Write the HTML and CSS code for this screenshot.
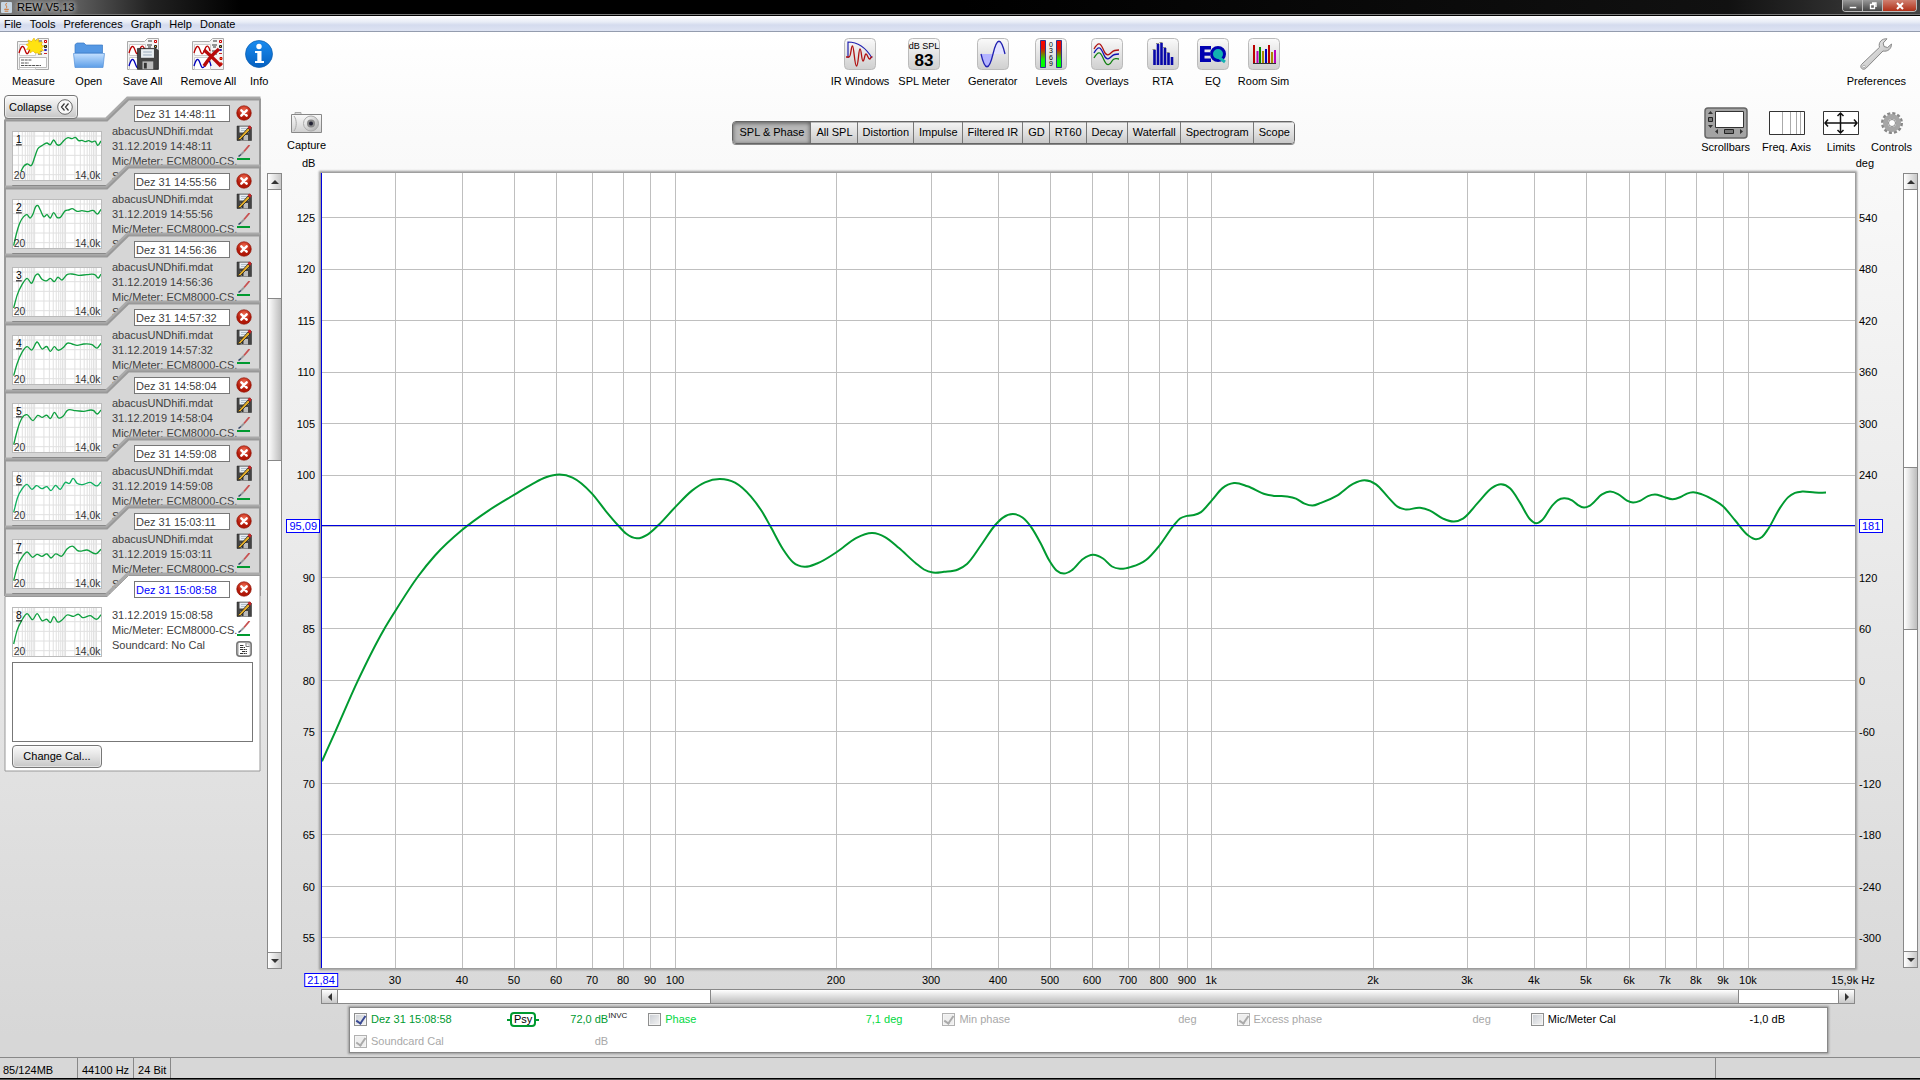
FILE: index.html
```html
<!DOCTYPE html>
<html lang="en">
<head>
	<meta charset="utf-8">
	<title>REW V5,13</title>
	<link rel="stylesheet" href="styles.css">
</head>
<body>
<svg class="defs" aria-hidden="true">
	<defs>
		<linearGradient id="g-btn" x2="0" y2="1"><stop offset="0" stop-color="#fafafa"/><stop offset="1" stop-color="#cfcfcf"/></linearGradient>
		<linearGradient id="g-folder" x2="0" y2="1"><stop offset="0" stop-color="#c4e0ff"/><stop offset="1" stop-color="#5c9ee8"/></linearGradient>
		<linearGradient id="g-info" x2="0" y2="1"><stop offset="0" stop-color="#1a8cf0"/><stop offset="1" stop-color="#0560c0"/></linearGradient>
		<linearGradient id="g-level" x2="0" y2="1"><stop offset="0" stop-color="#f00"/><stop offset=".3" stop-color="#e01000"/><stop offset=".75" stop-color="#0f0"/><stop offset="1" stop-color="#0f0"/></linearGradient>
		<radialGradient id="g-close" cy=".3"><stop offset="0" stop-color="#f06a50"/><stop offset="1" stop-color="#b01808"/></radialGradient>
		<linearGradient id="g-metal" x2="1" y2="1"><stop offset="0" stop-color="#fff"/><stop offset="1" stop-color="#a8a8a8"/></linearGradient>
	</defs>
	<symbol id="i-doc" viewBox="0 0 32 32">
		<path d="M.5 3.500h17l3-3h11v31H.5z" fill="#f4f4f4" stroke="#aaa"/>
		<path d="M2.500 6.500h16v11h-16zM2.500 19.500h16v12h-16z" fill="#fff" stroke="#ccc"/>
		<path d="M21 3h4M20 7h5M21 9h3M20 13h5M21 16h4" stroke="#333"/>
		<path d="M27.500 2.500h2v2h-2z" fill="#fff" stroke="#c00"/>
		<path d="M27.500 7.500h2v2h-2z" fill="#e7b62c" stroke="#222"/>
		<path d="M27.500 11.500h2v1h-2z" fill="#fff" stroke="#22b"/>
		<path d="M27 15.500h3" stroke="#c22"/>
	</symbol>
	<symbol id="i-red" viewBox="0 0 32 32"><path d="M2 15c2-7 4-9 6-3s3 4 5-1 4-3 5 2" fill="none" stroke="#b00" stroke-width="1.300"/></symbol>
	<symbol id="i-blue" viewBox="0 0 32 32"><path d="M2 28c2-7 4-9 6-3s3 6 6 1 4-3 5 2" fill="none" stroke="#00b" stroke-width="1.300"/></symbol>
	<symbol id="i-floppy" viewBox="0 0 16 16">
		<path d="M1 1h13l1.500 1.500v13H1z" fill="#444" stroke="#222" stroke-width=".5"/>
		<path d="M3.500 1.500h9v6h-9z" fill="#e9eef2"/><path d="M5 3.500h6M5 5.500h6" stroke="#9ab" stroke-width=".7"/>
		<path d="M4.500 10h7.500v5.500H4.500z" fill="#bbb"/><path d="M5.500 11h2v4h-2z" fill="#333"/>
	</symbol>
	<symbol id="i-close" viewBox="0 0 16 16">
		<circle cx="8" cy="8" r="7.300" fill="url(#g-close)" stroke="#8c1005" stroke-width=".6"/>
		<path d="M5.300 5.300l5.400 5.400M10.700 5.300l-5.400 5.400" stroke="#fff" stroke-width="2.400" stroke-linecap="round"/>
	</symbol>
	<symbol id="i-edit" viewBox="0 0 16 16">
		<use href="#i-floppy"/><path d="M2.500 13.500L12 3l2 2-9.500 9.500-3 .5z" fill="#e2ac28" stroke="#222" stroke-width=".8"/><path d="M11.500 2l2.500-1.500 1.500 2L14 5z" fill="#c22"/>
	</symbol>
	<symbol id="i-pen" viewBox="0 0 16 16">
		<path d="M13.500 0L8 6.500" stroke="#c75050" stroke-width="1.800"/><path d="M8 6.500L5 9.500" stroke="#999" stroke-width="1.800"/><path d="M5 9.500L2.500 11.500" stroke="#346" stroke-width="1.600"/>
		<path d="M1 14h13" stroke="currentColor" stroke-width="2"/>
	</symbol>
	<symbol id="i-note" viewBox="0 0 16 16">
		<rect x=".8" y=".8" width="14.400" height="14.400" rx="3" fill="#ccc" stroke="#777" stroke-width="1.500"/>
		<path d="M3 2h7l3.500 3.500V14H3z" fill="#fff"/><path d="M10 2v3.500h3.500" fill="none" stroke="#777"/>
		<path d="M4 4.500h4M4 6.500h5M4 8.500h7M6 10.500h5M4 12.500h7" stroke="#333" stroke-dasharray="3 .6 2 .6"/>
	</symbol>
</svg>

<header class="titlebar">
	<svg class="app-icon" viewBox="0 0 12 12"><rect width="12" height="12" rx="1" fill="#c8d6e2"/><path d="M6.500 1C3 4 8 4 5.500 7M3.500 8h5M4 10h4" stroke="#d06a20" fill="none"/></svg>
	<span class="app-title">REW V5,13</span>
	<div class="win-buttons">
		<button type="button" aria-label="Minimize"><svg viewBox="0 0 10 8"><path d="M1.500 4.500h7v2h-7z" fill="#fff" stroke="#555" stroke-width=".5"/></svg></button>
		<button type="button" aria-label="Restore"><svg viewBox="0 0 10 8"><path d="M4 1h4v4M2.500 2.500h4v4h-4z" fill="none" stroke="#fff" stroke-width="1.300"/></svg></button>
		<button type="button" class="win-close" aria-label="Close"><svg viewBox="0 0 10 8"><path d="M2 1l6 6M8 1L2 7" stroke="#fff" stroke-width="2"/></svg></button>
	</div>
</header>

<nav class="menubar">
	<a href="#">File</a>
	<a href="#">Tools</a>
	<a href="#">Preferences</a>
	<a href="#">Graph</a>
	<a href="#">Help</a>
	<a href="#">Donate</a>
</nav>

<main class="main">
	<div class="toolbar">
		<div class="tools">
			<button type="button" class="tool">
				<svg viewBox="0 0 32 32"><use href="#i-doc"/><use href="#i-red"/><path d="M2.500 19.500h27v10h-27z" fill="#fff" stroke="#bbb"/><path d="M4 22h11M4 25h8M4 27.500h20" stroke="#555" stroke-dasharray="3 .7"/><path d="M17 0l1.500 3 3-2 .3 3.500 3.500-.5-1 3.200 2.700.8-2.500 2 2 2.500-3.500.5.500 3.500-3-1.500L18 15l-2-2-3 2 0-3.500-3.500 0 2-2.800L9 6.500l3-1-1-3.500 3.500 1.500z" fill="#ffe311" stroke="#e8b400" stroke-width=".6"/></svg>
				Measure
			</button>
			<button type="button" class="tool">
				<svg viewBox="0 0 32 32"><path d="M2 15V6.500L4 5h7l2 2h16.500v8z" fill="#5598e4" stroke="#3a78c4" stroke-width=".7"/><path d="M.5 15.500h31L30 29.500H2z" fill="url(#g-folder)" stroke="#5590d8" stroke-width=".7"/></svg>
				Open
			</button>
			<button type="button" class="tool">
				<svg viewBox="0 0 32 32"><use href="#i-doc"/><use href="#i-red"/><use href="#i-blue"/><use href="#i-floppy" x="9" y="9" width="23" height="23"/></svg>
				Save All
			</button>
			<div class="tools-pair">
				<button type="button" class="tool">
					<svg viewBox="0 0 32 32"><use href="#i-doc"/><use href="#i-red"/><use href="#i-blue"/><path d="M28 19.500h2v2h-2zM28 25h2v2h-2z" fill="#e7b62c" stroke="#c00"/><path d="M12 12c5 4 10 9 17 16M27 11c-6 5-10 9-15 17" stroke="#b80a0a" stroke-width="3.500" fill="none"/></svg>
					Remove All
				</button>
				<button type="button" class="tool">
					<svg viewBox="0 0 28 32"><circle cx="14" cy="16" r="13.500" fill="url(#g-info)" stroke="#0a5cae" stroke-width=".7"/><circle cx="14" cy="8.500" r="2.700" fill="#fff"/><path d="M10 13h6.500v10H19v2h-9v-2h2.300v-8H10z" fill="#fff"/></svg>
					Info
				</button>
			</div>
		</div>
		<div class="tools">
			<div class="tools-pair">
				<button type="button" class="tool">
					<svg viewBox="0 0 32 32"><rect x=".5" y=".5" width="31" height="31" rx="4" class="plate"/><path d="M4 20V4c10 0 18 6 24 16" fill="none" stroke="#2222b0" stroke-width="1.200"/><path d="M2 19h3c2 0 2-11 3.500-11s2 20 4 20 2-17 3.500-17 1.500 12 3 12 1.500-7 3-7 2 5 3.500 5 1-3 3-2" fill="none" stroke="#b01010" stroke-width="1.300"/></svg>
					IR Windows
				</button>
				<button type="button" class="tool">
					<svg viewBox="0 0 32 32"><rect x=".5" y=".5" width="31" height="31" rx="4" class="plate"/><text x="16" y="11" class="plate-small">dB SPL</text><text x="16" y="28" class="plate-big">83</text></svg>
					SPL Meter
				</button>
			</div>
			<button type="button" class="tool">
				<svg viewBox="0 0 32 32"><rect x=".5" y=".5" width="31" height="31" rx="4" class="plate"/><path d="M4 16C8 33 12 33 16 16z" fill="#b4b4ff"/><path d="M16 16h12C24-1 20-1 16 16z" fill="#e4e4ff"/><path d="M4 16C8 33 12 33 16 16S24-1 28 16" fill="none" stroke="#2020b0" stroke-width="1.300"/></svg>
				Generator
			</button>
			<button type="button" class="tool">
				<svg viewBox="0 0 32 32"><rect x=".5" y=".5" width="31" height="31" rx="4" class="plate"/><path d="M5.500 2.500h5v27h-5zM21.500 2.500h5v27h-5z" fill="url(#g-level)" stroke="#338"/><g class="plate-digits"><text x="16" y="9">0</text><text x="16" y="15">3</text><text x="16" y="22">6</text><text x="16" y="28">9</text></g></svg>
				Levels
			</button>
			<button type="button" class="tool">
				<svg viewBox="0 0 32 32"><rect x=".5" y=".5" width="31" height="31" rx="4" class="plate"/><g fill="none" stroke-width="1.300"><path d="M3 11c5-9 7-5 10 2s6 3 8 1 4-2 7-2" stroke="#b01010"/><path d="M3 15c5-9 7-5 10 2s6 3 8 1 4-2 7-2" stroke="#1010b0"/><path d="M3 20c5-9 7-5 10 2s6 5 8 1 4-2 7-2" stroke="#108010"/></g></svg>
				Overlays
			</button>
			<button type="button" class="tool">
				<svg viewBox="0 0 32 32"><rect x=".5" y=".5" width="31" height="31" rx="4" class="plate"/><path d="M7.500 27V12M11 27V6M14.500 27V5M18 27V10M21.500 27V15M25 27V19" stroke="#0808a8" stroke-width="2.600"/><path d="M5.500 11.500h3M9 5.500h3M12.500 4.500h3M16 9.500h3M19.500 14.500h3" stroke="#888"/></svg>
				RTA
			</button>
			<div class="tools-pair">
				<button type="button" class="tool">
					<svg viewBox="0 0 32 32"><rect x=".5" y=".5" width="31" height="31" rx="4" class="plate"/><path d="M3 8h11v3.500H7.500v2.800H13v3.400H7.500v2.800H14V24H3z" fill="#0000b0"/><circle cx="21" cy="16" r="6.500" fill="#12b0b0" stroke="#0000b0" stroke-width="3"/><path d="M20 18l8 6" stroke="#12b0b0" stroke-width="3"/></svg>
					EQ
				</button>
				<button type="button" class="tool">
					<svg viewBox="0 0 32 32"><rect x=".5" y=".5" width="31" height="31" rx="4" class="plate"/><g stroke-width="2"><path d="M6 25V7" stroke="#b00"/><path d="M9.500 25V13" stroke="#b0b"/><path d="M12 25V9" stroke="#080"/><path d="M15 25V13" stroke="#a80"/><path d="M18 25V11" stroke="#00b"/><path d="M21 25V7" stroke="#b00"/><path d="M24 25V14" stroke="#a80"/><path d="M27 25V12" stroke="#b0b"/></g><path d="M5 25.500h23" stroke="#333"/></svg>
					Room Sim
				</button>
			</div>
		</div>
		<div class="tools">
			<button type="button" class="tool">
				<svg viewBox="0 0 32 32"><path d="M27 .8c-5-.5-9 3.500-7.500 8.500L1.500 26.500c-2.200 3 1.300 6.300 4.200 4L23 13c4.500 1 8.500-2 8.500-7l-4 3.500-3.500-1-.8-3.500z" fill="url(#g-metal)" stroke="#888"/><circle cx="4" cy="28.500" r="1.300" fill="#fff" stroke="#888" stroke-width=".6"/></svg>
				Preferences
			</button>
		</div>
	</div>

	<div class="workspace">
		<aside class="sidebar">
			<div class="measurements">
				<button type="button" class="btn btn-collapse">Collapse
					<svg viewBox="0 0 16 16"><circle cx="8" cy="8" r="7.300" fill="#f8f8f8" stroke="#666"/><path d="M7.500 4.500L4.500 8l3 3.500M11.500 4.500L8.500 8l3 3.500" fill="none" stroke="#333" stroke-width="1.200"/></svg>
				</button>
				<ul class="cards" id="cards"></ul>
			</div>
			<div class="vscroll">
				<button type="button" aria-label="Scroll up"><i class="arrow up"></i></button>
				<div class="track"><span class="thumb" style="top:14.2%;height:21.4%"></span></div>
				<button type="button" aria-label="Scroll down"><i class="arrow down"></i></button>
			</div>
		</aside>

		<section class="graph">
			<div class="graph-bar">
				<button type="button" class="tool tool-capture">
					<svg viewBox="0 0 32 22"><path d="M4 2.500V.5h6v2" fill="#ddd" stroke="#aaa"/><path d="M.5 2.500h30v18H.5z" fill="url(#g-btn)" stroke="#888"/><path d="M3 4c3 4 3 11 0 15" fill="none" stroke="#aaa"/><circle cx="20" cy="11.500" r="7.500" fill="url(#g-metal)" stroke="#aaa"/><circle cx="20" cy="11.500" r="4" fill="#888"/><circle cx="20" cy="11.500" r="2" fill="#223"/></svg>
					Capture
				</button>
				<div class="tabs">
					<button type="button" class="tab active">SPL &amp; Phase</button>
					<button type="button" class="tab">All SPL</button>
					<button type="button" class="tab">Distortion</button>
					<button type="button" class="tab">Impulse</button>
					<button type="button" class="tab">Filtered IR</button>
					<button type="button" class="tab">GD</button>
					<button type="button" class="tab">RT60</button>
					<button type="button" class="tab">Decay</button>
					<button type="button" class="tab">Waterfall</button>
					<button type="button" class="tab">Spectrogram</button>
					<button type="button" class="tab">Scope</button>
				</div>
				<div class="view-tools">
					<button type="button" class="tool">
						<svg viewBox="0 0 44 32"><rect x="1" y="1" width="42" height="30" rx="3" fill="#a4a4a4" stroke="#666" stroke-width="1.500"/><path d="M11.500 4.500h28v16h-28z" fill="#fff" stroke="#333"/><path d="M4 7h5L6.500 4zM4 18h5l-2.500 3zM14 22v5l-3-2.500zM36 22v5l3-2.500z" fill="#333"/><path d="M4.500 10.500h4v4h-4zM20.500 22.500h9v4h-9z" fill="#777" stroke="#222"/></svg>
						Scrollbars
					</button>
					<button type="button" class="tool">
						<svg viewBox="0 0 36 32"><path d="M.5 4.500h35v23H.5z" fill="#fff" stroke="#333"/><path d="M13.500 5v22M21.500 5v22M27.500 5v22M31.500 5v22" stroke="#aaa"/></svg>
						Freq. Axis
					</button>
					<button type="button" class="tool">
						<svg viewBox="0 0 36 32"><path d="M.5 4.500h35v23H.5z" fill="#fff" stroke="#333"/><path d="M2 16h32M17.500 6v20M5 12.500L2 16l3 3.500M31 12.500l3 3.500-3 3.500M14.500 9l3-3 3 3M14.500 23l3 3 3-3" fill="none" stroke="#111" stroke-width="1.500"/></svg>
						Limits
					</button>
					<button type="button" class="tool">
						<svg viewBox="0 0 24 32"><circle cx="12" cy="16" r="9.500" fill="none" stroke="#888" stroke-width="3" stroke-dasharray="3 1.974"/><circle cx="12" cy="16" r="6.500" fill="#fff" stroke="#a6a6a6" stroke-width="5"/><circle cx="12" cy="16" r="3.500" fill="#fff" stroke="#888"/></svg>
						Controls
					</button>
				</div>
			</div>

			<div class="units"><span>dB</span><span>deg</span></div>

			<div class="plot-row">
				<div class="axis axis-db" id="axis-db"></div>
				<div class="plot">
					<svg id="plot" viewBox="0 0 1534 796" preserveAspectRatio="none">
						<g id="grid" class="grid"></g>
						<path class="curve" id="curve"/>
						<path class="cursor" d="M.5 0V796M0 352.500H1534"/>
					</svg>
				</div>
				<div class="axis axis-deg" id="axis-deg"></div>
				<div class="vscroll">
					<button type="button" aria-label="Scroll up"><i class="arrow up"></i></button>
					<div class="track"><span class="thumb" style="top:36.4%;height:21.4%"></span></div>
					<button type="button" aria-label="Scroll down"><i class="arrow down"></i></button>
				</div>
			</div>

			<div class="axis axis-freq" id="axis-freq"></div>

			<div class="hscroll">
				<button type="button" aria-label="Scroll left"><i class="arrow left"></i></button>
				<div class="track"><span class="thumb" style="left:24.8%;width:68.6%"></span></div>
				<button type="button" aria-label="Scroll right"><i class="arrow right"></i></button>
			</div>

			<div class="legend">
				<div class="trace trace-spl">
					<input type="checkbox" id="t-spl" checked><label for="t-spl">Dez 31 15:08:58</label>
					<span class="psy">Psy</span><span class="value">72,0 dB</span><sup>INVC</sup>
				</div>
				<div class="trace trace-phase">
					<input type="checkbox" id="t-phase"><label for="t-phase">Phase</label><span class="value">7,1 deg</span>
				</div>
				<div class="trace">
					<input type="checkbox" id="t-min" checked disabled><label for="t-min">Min phase</label><span class="value">deg</span>
				</div>
				<div class="trace">
					<input type="checkbox" id="t-exc" checked disabled><label for="t-exc">Excess phase</label><span class="value">deg</span>
				</div>
				<div class="trace trace-mic">
					<input type="checkbox" id="t-mic"><label for="t-mic">Mic/Meter Cal</label><span class="value">-1,0 dB</span>
				</div>
				<div class="trace">
					<input type="checkbox" id="t-card" checked disabled><label for="t-card">Soundcard Cal</label><span class="value">dB</span>
				</div>
			</div>
		</section>
	</div>
</main>

<footer class="statusbar">
	<span class="status-mem">85/124MB</span>
	<span>44100 Hz</span>
	<span>24 Bit</span>
	<span class="status-msg"></span>
	<span class="status-end"></span>
</footer>
<div class="taskbar"></div>

<script src="script.js"></script>
</body>
</html>
```
FILE: styles.css
```css
* {
	box-sizing: border-box;
}

body {
	margin: 0;
	min-height: 100vh;
	display: flex;
	flex-direction: column;
	font-family: "Liberation Sans", Arial, sans-serif;
	font-size: 11px;
	line-height: 15px;
	color: #000;
	background: #d6d6d6;
}

button,
input,
textarea {
	font: inherit;
	color: inherit;
	margin: 0;
}

button {
	padding: 0;
	border: none;
	background: none;
	white-space: nowrap;
}

.defs {
	position: absolute;
	width: 0;
	height: 0;
}

/* window frame */
.titlebar {
	display: flex;
	align-items: center;
	height: 16px;
	padding: 0 3px 0 1px;
	border-bottom: 1px solid #000;
	box-shadow: inset 0 -1px #777;
	background: linear-gradient(90deg, #777 0, #6a6a6a 60px, #222 150px, #000 240px, #000 50%, #111 90%, #444 100%);
}

.app-icon {
	width: 11px;
	height: 11px;
}

.app-title {
	margin-left: 5px;
	color: #000;
	text-shadow: 0 0 4px #bbb, 0 0 4px #bbb, 0 0 6px #aaa;
}

.win-buttons {
	display: flex;
	align-self: flex-start;
	margin-left: auto;
	height: 12px;
	border: 1px solid #bbb;
	border-top: none;
	border-radius: 0 0 4px 4px;
	overflow: hidden;
}

.win-buttons button {
	width: 20px;
	display: flex;
	align-items: center;
	justify-content: center;
	background: linear-gradient(#999, #444);
	border-right: 1px solid #bbb;
}

.win-buttons .win-close {
	width: 33px;
	border-right: none;
	background: linear-gradient(#d08070, #b03018);
}

.win-buttons svg {
	width: 10px;
	height: 8px;
}

.menubar {
	display: flex;
	align-items: flex-end;
	gap: 8px;
	height: 16px;
	padding: 0 4px;
	border-bottom: 1px solid #949cae;
	background: linear-gradient(#fff, #e8ecf6 40%, #d4dbee 60%, #dde3f3);
}

.menubar a {
	color: #000;
	line-height: 14px;
	text-decoration: none;
}

.main {
	flex: 1;
	display: flex;
	flex-direction: column;
	background: linear-gradient(#fff, #fbfbfb 8%, #d7d7d7 98%);
}

/* toolbar */
.toolbar {
	display: flex;
	justify-content: space-between;
	padding: 6px 14px 3px 12px;
}

.tools {
	display: flex;
	gap: 18px;
}

.tools-pair {
	display: flex;
	gap: 9px;
}

.tool {
	display: flex;
	flex-direction: column;
	align-items: center;
	gap: 4px;
}

.tool svg {
	height: 32px;
}

.plate {
	fill: url(#g-btn);
	stroke: #bbb;
}

.plate-small {
	font-size: 9px;
	text-anchor: middle;
}

.plate-big {
	font-size: 17px;
	font-weight: bold;
	text-anchor: middle;
}

.plate-digits {
	font-size: 7px;
	text-anchor: middle;
}

.workspace {
	flex: 1;
	display: flex;
}

/* measurement list */
.sidebar {
	display: flex;
	justify-content: space-between;
	width: 282px;
	padding-left: 4px;
}

.measurements {
	position: relative;
	width: 257px;
	padding-top: 6px;
}

.btn {
	border: 1px solid #777;
	border-radius: 4px;
	background: linear-gradient(#fafafa, #e2e2e2 50%, #c6c6c6);
	box-shadow: inset 0 0 0 1px rgba(255, 255, 255, 0.5);
}

.btn-collapse {
	position: absolute;
	z-index: 1;
	top: 3px;
	left: 0;
	display: flex;
	align-items: center;
	gap: 5px;
	height: 24px;
	padding: 0 4px;
}

.btn-collapse svg {
	width: 16px;
	height: 16px;
}

.cards {
	list-style: none;
	margin: 0;
	padding: 0;
}

.card {
	position: relative;
	height: 68px;
	color: #404040;
}

.card.open {
	height: auto;
}

.card-back {
	position: absolute;
	top: 0;
	left: 0;
	width: 257px;
	height: 200px;
	overflow: visible;
}

.card-body {
	position: relative;
	display: grid;
	grid-template-columns: 90px 122px 16px;
	column-gap: 6px;
	height: 88px;
	padding: 7px 8px 0 8px;
}

.thumb-plot {
	align-self: end;
	margin-bottom: 5px;
	width: 90px;
	height: 50px;
	border: 1px solid #bbb;
	background: #fff;
	overflow: hidden;
}

.thumb-plot text {
	font-size: 31px;
	fill: #333;
}

.thumb-plot .num {
	fill: #000;
	text-decoration: underline;
}

.card-info {
	display: flex;
	flex-direction: column;
	padding-left: 4px;
}

.card-info input {
	align-self: flex-end;
	width: 96px;
	height: 17px;
	padding: 0 1px;
	border: 1px solid #777;
	background: #fff;
}

.card.open input {
	color: #00f;
}

.card-text {
	flex: 1;
	display: flex;
	flex-direction: column;
	justify-content: center;
	white-space: nowrap;
}

.card-icons {
	display: flex;
	flex-direction: column;
	gap: 4px;
	color: #009a30;
}

.card-icons button {
	height: 16px;
}

.card-icons svg {
	display: block;
	width: 16px;
	height: 16px;
}

.card-notes {
	position: relative;
	display: none;
	padding: 0 8px 5px;
}

.card.open .card-notes {
	display: block;
}

.card-notes textarea {
	display: block;
	width: 241px;
	height: 80px;
	border: 1px solid #777;
	background: #fff;
	resize: none;
}

.card-notes .btn {
	width: 90px;
	height: 23px;
	margin-top: 3px;
	color: #000;
}

/* scrollbars */
.vscroll,
.hscroll {
	display: flex;
	border: 1px solid #888;
	background: #fff;
}

.vscroll {
	flex-direction: column;
	width: 15px;
}

.sidebar .vscroll {
	margin: 81px 0 88px;
}

.vscroll button,
.hscroll button {
	display: flex;
	align-items: center;
	justify-content: center;
	flex: none;
	width: 13px;
	height: 13px;
	background: linear-gradient(90deg, #fff, #c8c8c8);
}

.vscroll button {
	height: 15px;
}

.hscroll button {
	width: 15px;
	background: linear-gradient(#fff, #c8c8c8);
}

.track {
	position: relative;
	flex: 1;
}

.vscroll .track {
	border: solid #888;
	border-width: 1px 0;
}

.hscroll .track {
	border: solid #888;
	border-width: 0 1px;
}

.thumb {
	position: absolute;
}

.vscroll .thumb {
	left: 0;
	right: 0;
	border: solid #888;
	border-width: 1px 0;
	background: linear-gradient(90deg, #fff, #bdbdbd);
}

.hscroll .thumb {
	top: 0;
	bottom: 0;
	border: solid #888;
	border-width: 0 1px;
	background: linear-gradient(#fff, #bdbdbd);
}

.arrow {
	border: 4px solid transparent;
}

.arrow.up {
	border-top: none;
	border-bottom-color: #333;
}

.arrow.down {
	border-bottom: none;
	border-top-color: #333;
}

.arrow.left {
	border-left: none;
	border-right-color: #333;
}

.arrow.right {
	border-right: none;
	border-left-color: #333;
}

/* graph */
.graph {
	flex: 1;
	display: flex;
	flex-direction: column;
	padding: 15px 2px 4px 5px;
}

.graph-bar {
	display: flex;
	justify-content: space-between;
	align-items: flex-start;
	padding-right: 6px;
}

.view-tools {
	display: flex;
	gap: 12px;
}

.graph-bar .tool {
	gap: 1px;
}

.tool-capture svg {
	width: 32px;
	height: 22px;
}

.graph-bar .tool-capture {
	margin-top: 5px;
	gap: 4px;
}

.tabs {
	display: flex;
	margin-top: 14px;
	border: 1px solid #666;
	border-radius: 4px;
	box-shadow: 0 1px #888;
	overflow: hidden;
}

.tab {
	height: 21px;
	padding: 0 4px 0 5px;
	border-left: 1px solid #777;
	background: linear-gradient(#f4f4f4, #dcdcdc 60%, #c8c8c8);
	box-shadow: inset 0 1px #bbb;
}

.tab:first-child {
	border-left: none;
}

.tab.active {
	padding: 0 6px;
	background: #b8b8b8;
	box-shadow: inset 0 1px 4px #555;
}

.units {
	display: flex;
	justify-content: space-between;
	align-items: flex-end;
	height: 18px;
	padding: 0 44px 2px 15px;
}

.plot-row {
	flex: 1;
	display: flex;
	min-height: 400px;
}

.plot {
	position: relative;
	flex: 1;
	background: #fff;
	box-shadow: 0 0 2px 2px #999;
}

.plot svg {
	position: absolute;
	width: 100%;
	height: 100%;
}

.grid path {
	stroke: #bfbfbf;
	stroke-width: 1px;
	shape-rendering: crispEdges;
	vector-effect: non-scaling-stroke;
}

.curve {
	fill: none;
	stroke: #009a30;
	stroke-width: 2px;
	shape-rendering: geometricPrecision;
}

.cursor {
	fill: none;
	stroke: #0000e0;
	stroke-width: 1px;
	vector-effect: non-scaling-stroke;
	shape-rendering: crispEdges;
}

.axis {
	position: relative;
}

.axis span {
	position: absolute;
	white-space: nowrap;
}

.axis-db {
	width: 34px;
}

.axis-db span {
	right: 6px;
	transform: translateY(-50%);
}

.axis-deg {
	width: 48px;
}

.axis-deg span {
	left: 4px;
	transform: translateY(-50%);
}

.axis-freq {
	height: 21px;
	margin: 0 63px 0 34px;
}

.axis-freq span {
	top: 5px;
	transform: translateX(-50%);
}

.axis .readout {
	z-index: 1;
	height: 14px;
	padding: 0 2px;
	border: 1px solid #00f;
	line-height: 12px;
	color: #00f;
	background: #fff;
}

.axis-db .readout {
	right: 1px;
}

.hscroll {
	height: 15px;
	margin: 0 63px 0 34px;
}

.legend {
	display: grid;
	grid-template-columns: repeat(5, 1fr);
	margin: 3px 90px 0 62px;
	padding: 0 2px 0 4px;
	border: 1px solid #888;
	background: #fff;
	box-shadow: 0 0 2px 1px #999;
}

.trace {
	display: flex;
	align-items: center;
	height: 22px;
	padding-right: 20px;
	color: #a8a8a8;
}

.trace input {
	appearance: none;
	position: relative;
	width: 13px;
	height: 13px;
	margin-right: 4px;
	border: 1px solid #8e8f8f;
	box-shadow: inset 0 0 0 1px #f4f4f4;
	background: linear-gradient(135deg, #c8ccd2, #f4f4f4);
}

.trace input:disabled {
	border-color: #b1b1b1;
	background: #eee;
}

.trace input:checked::after {
	content: "";
	position: absolute;
	left: 3px;
	top: 0;
	width: 4px;
	height: 8px;
	border: solid #3a4a94;
	border-width: 0 2px 2px 0;
	transform: rotate(35deg);
}

.trace input:disabled::after {
	border-color: #aaa;
}

.value {
	min-width: 60px;
	margin-left: auto;
	margin-right: 20px;
	text-align: right;
}

.trace-spl {
	color: #009a30;
}

.trace-spl .value {
	margin-left: 12px;
	margin-right: 0;
}

.trace sup {
	width: 20px;
	font-size: 8px;
	line-height: 8px;
	color: #222;
	align-self: flex-start;
	padding-top: 4px;
}

.trace-phase {
	color: #00d840;
}

.trace-mic {
	color: #000;
}

.psy {
	position: relative;
	margin-left: auto;
	width: 26px;
	height: 15px;
	border: 2px solid #009a30;
	border-radius: 4px;
	text-align: center;
	line-height: 11px;
	color: #000;
}

.psy::before,
.psy::after {
	content: "";
	position: absolute;
	top: 5px;
	width: 5px;
	height: 2px;
	background: #009a30;
}

.psy::before {
	right: 100%;
}

.psy::after {
	left: 100%;
}

/* status */
.statusbar {
	display: flex;
	height: 21px;
	border-top: 1px solid #888;
	background: #d7d7d7;
}

.statusbar span {
	padding: 5px 4px 0;
	border-right: 1px solid #888;
}

.statusbar .status-mem {
	width: 78px;
	padding-left: 3px;
}

.statusbar .status-msg {
	flex: 1;
}

.statusbar .status-end {
	width: 204px;
	border-right: none;
}

.taskbar {
	height: 2px;
	border-top: 1px solid #000;
	background: #555;
}
```
FILE: script.js
```js
// ---- measurement cards ----
const cards = [
	{ time: '14:48:11', pts: '24,118 32,103 42,96 57,98 65,76 74,51 87,41 102,33 112,38 122,24 132,38 142,38 152,26 165,17 177,20 187,16 197,26 207,25 217,29 227,26 237,30 247,28 254,40 264,27' },
	{ time: '14:55:56', pts: '2,137 10,102 20,70 32,50 42,44 52,54 60,42 67,22 75,17 82,30 92,50 102,44 112,54 122,38 132,52 142,52 157,32 167,30 177,26 192,34 207,32 222,35 242,32 254,42 264,28' },
	{ time: '14:56:36', pts: '2,120 12,83 27,50 42,31 57,45 67,23 75,18 87,34 102,38 112,31 124,41 134,28 147,36 162,20 177,18 197,22 222,20 247,21 256,30 264,18' },
	{ time: '14:57:32', pts: '2,119 12,84 27,49 42,32 57,42 72,18 87,39 102,32 112,46 124,32 134,42 152,34 162,22 177,24 192,28 212,24 237,26 253,36 264,22' },
	{ time: '14:58:04', pts: '2,122 14,75 27,42 42,32 60,50 74,34 87,40 102,34 112,44 124,25 137,42 150,37 162,20 187,20 212,22 242,20 253,30 264,18' },
	{ time: '14:59:08', color: '#10b060', pts: '2,121 14,76 27,51 42,37 57,52 70,41 87,50 102,44 114,56 127,40 142,52 157,31 170,34 180,19 192,34 207,38 232,31 254,41 264,30' },
	{ time: '15:03:11', pts: '2,122 14,77 27,52 42,36 59,52 72,43 87,49 102,42 114,54 127,42 147,48 162,27 180,19 194,32 222,30 252,40 264,28' },
	{ time: '15:08:58', open: true, pts: '2,108 12,68 27,36 42,17 59,35 72,17 87,38 102,34 112,44 122,26 134,42 147,36 162,21 182,25 197,19 207,28 232,23 253,33 264,20' }
];

// smooth path through a list of [x, y], x always growing
function smooth(p) {
	const n = p.length - 1;
	const s = i => (p[i + 1][1] - p[i][1]) / (p[i + 1][0] - p[i][0]);
	const m = p.map((q, i) => {
		if (i === 0) return s(0);
		if (i === n) return s(n - 1);
		const h0 = q[0] - p[i - 1][0], h1 = p[i + 1][0] - q[0];
		return (s(i - 1) * h1 + s(i) * h0) / (h0 + h1);
	});
	let d = `M${p[0][0]} ${p[0][1]}`;
	for (let i = 0; i < n; i++) {
		const [x0, y0] = p[i], [x1, y1] = p[i + 1], h = (x1 - x0) / 3;
		d += `C${[x0 + h, y0 + m[i] * h, x1 - h, y1 - m[i + 1] * h, x1, y1].map(v => v.toFixed(2)).join(' ')}`;
	}
	return d;
}

function parse(s) {
	return s.trim().split(/\s+/).map(q => q.split(',').map(Number));
}

let thumbGrid = '';
for (let dec = 10; dec < 20000; dec *= 10) {
	for (let k = 1; k < 10; k++) {
		const x = Math.log10(dec * k / 20) / Math.log10(700) * 264;
		if (x > 0 && x < 264) thumbGrid += `M${x.toFixed(1)} 0V150`;
	}
}
for (let y = 12; y < 150; y += 29) thumbGrid += `M0 ${y}H270`;

document.getElementById('cards').innerHTML = cards.map((c, i) => {
	const bottom = c.open ? 197 : 90;
	const shape = `M1 ${bottom}V22.500H103L124.500 1.500H256V${bottom}`;
	return `
	<li class="card${c.open ? ' open' : ''}">
		<svg class="card-back">
			<path d="M1 21H102L123.500 0H256.500" fill="none" stroke="#aaa" stroke-width="3"/>
			<path d="${shape}z" fill="${c.open ? '#fff' : '#d6d6d6'}"/>
			<path d="${shape}${c.open ? 'z' : ''}" fill="none" stroke="#999" stroke-width="${c.open ? 1 : 2}"/>
			${c.open ? '' : '<path d="M8.500 90V87.500H110" fill="none" stroke="#666"/>'}
		</svg>
		<div class="card-body">
			<svg class="thumb-plot" viewBox="0 0 264 144">
				<path d="${thumbGrid}" stroke="#e0e0e0" stroke-width="3"/>
				<path d="${smooth(parse(c.pts))}" fill="none" stroke="${c.color || '#10a040'}" stroke-width="4"/>
				<text class="num" x="9" y="34">${i + 1}</text>
				<text x="2" y="141">20</text>
				<text x="262" y="141" text-anchor="end">14,0k</text>
			</svg>
			<div class="card-info">
				<input type="text" aria-label="Name" value="Dez 31 ${c.time}">
				<div class="card-text">
					${c.open ? '' : '<span>abacusUNDhifi.mdat</span>'}
					<span>31.12.2019 ${c.time}</span>
					<span>Mic/Meter: ECM8000-CS.</span>
					<span>Soundcard: No Cal</span>
				</div>
			</div>
			<div class="card-icons">
				<button type="button" aria-label="Remove"><svg><use href="#i-close"/></svg></button>
				<button type="button" aria-label="Save"><svg><use href="#i-edit"/></svg></button>
				<button type="button" aria-label="Colour"><svg><use href="#i-pen"/></svg></button>
				<button type="button" aria-label="Notes"><svg><use href="#i-note"/></svg></button>
			</div>
		</div>
		${c.open ? '<div class="card-notes"><textarea aria-label="Notes"></textarea><button type="button" class="btn">Change Cal...</button></div>' : ''}
	</li>`;
}).join('');

// ---- main plot ----
const W = 1534, H = 796;
const fx = f => 354 + 536.3 * Math.log10(f / 100);
const dy = db => 44 + (125 - db) * 10.3;
const pct = (v, t) => (v / t * 100).toFixed(2) + '%';

let grid = '', dbLabels = '', degLabels = '', freqLabels = '';

for (let db = 125, deg = 540; db >= 55; db -= 5, deg -= 60) {
	grid += `<path d="M0 ${Math.round(dy(db)) + 0.5}H${W}"/>`;
	const top = `style="top:${pct(dy(db) + 1, H)}"`;
	if (db !== 95) {
		dbLabels += `<span ${top}>${db}</span>`;
		degLabels += `<span ${top}>${deg}</span>`;
	}
}
dbLabels += `<span class="readout" style="top:${pct(353, H)}">95,09</span>`;
degLabels += `<span class="readout" style="top:${pct(353, H)}">181</span>`;

[30, 40, 50, 60, 70, 80, 90, 100, 200, 300, 400, 500, 600, 700, 800, 900, 1000,
	2000, 3000, 4000, 5000, 6000, 7000, 8000, 9000, 10000].forEach(f => {
	const x = Math.round(fx(f));
	grid += `<path d="M${x + 0.5} 0V${H}"/>`;
	freqLabels += `<span style="left:${pct(x, W)}">${f < 1000 ? f : f / 1000 + 'k'}</span>`;
});
freqLabels += `<span style="left:${pct(1532, W)}">15,9k Hz</span>`;
freqLabels += `<span class="readout" style="left:0">21,84</span>`;

document.getElementById('grid').innerHTML = grid;
document.getElementById('axis-db').innerHTML = dbLabels;
document.getElementById('axis-deg').innerHTML = degLabels;
document.getElementById('axis-freq').innerHTML = freqLabels;

const spl = parse(`322,762 335,733 358,681 384,630 395,612 418,577 435,556 462,530.5 488.5,511 514,495.300 533,484
	546,477.700 559.5,475 572.5,478 592,494 606,511.7 618,525.7 626,534 636.8,538.8 647.5,535 659,525 675.7,507 692,491 705,482.700 720,479.300
	735,483 751,497 762,512 770,526 783,549.7 793,562.7 804.5,567.3 817,564 837.5,552 856,538.5 872.5,533.5 885,537.5 899,548.5
	915.5,563.5 924,570 933,573 944,572.3 958,570 967,564.5 981.5,545 995,525.7 1003,518 1013,514.5 1022.5,518 1031.5,528
	1040.5,543.5 1049,560.5 1056.5,571 1064,574 1071.5,571 1083,559.5 1093,555.3 1103,559 1112,567 1120,569.3 1131.5,567.3
	1146,560.5 1159,546.5 1174,525.5 1180,519 1187,516.3 1194,515.5 1201,512.5 1212,500.5 1222.5,488.5 1234,483.5 1247.5,486.7
	1265.5,494.7 1274,496.3 1287,496.8 1296,499 1304.5,504 1312.5,506 1321,503.3 1337,496 1353,484.3 1364.5,480.7 1376,484.7
	1388.5,498 1397.5,507 1405,509.8 1420,508.2 1430,511 1443,519 1454,522 1463,519 1478,503 1492,488.3 1501,484.7 1510,488.7
	1520,503 1530,519.7 1536,523.7 1542,520.7 1552,506.3 1558,500.5 1564,498.7 1572,500.8 1578,505.5 1584,508 1590,506 1602,494.8
	1610,492 1618,494.5 1627,501 1633,503 1640,501.3 1648,496.5 1655,495 1663,497 1672.7,499.7 1680,497.7 1687,494 1693,492.7
	1702,494.8 1713,500 1723,506.7 1735,520.7 1748,535.7 1756,539.7 1762,537.5 1768,529.7 1780,508.3 1788,497.8 1795,493.3
	1802,492 1815,493 1826,493`).map(p => [p[0] - 321, p[1] - 173]);
document.getElementById('curve').setAttribute('d', smooth(spl));
```
